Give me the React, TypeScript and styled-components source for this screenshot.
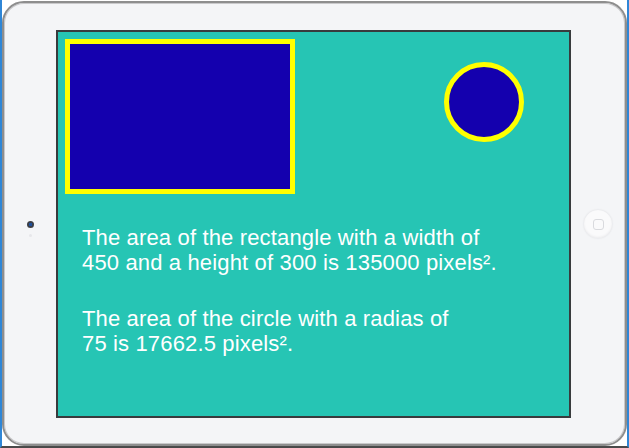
import { createGlobalStyle } from 'styled-components'
import styled from 'styled-components'

const GlobalStyle = createGlobalStyle`
  html, body {
    margin: 0;
    padding: 0;
    background: #ffffff;
  }
  body {
    font-family: "Liberation Sans", Arimo, Arial, Helvetica, sans-serif;
  }
`

const Stage = styled.div`
  box-sizing: border-box;
  width: 629px;
  height: 448px;
  display: flex;
  padding-top: 1px;
  border-left: 2px solid #2f86d6;
  border-right: 2px solid #2f86d6;
  border-bottom: 2px solid #4a4a4a;
  background: #ffffff;
`

const Device = styled.div`
  box-sizing: border-box;
  flex: 1;
  display: grid;
  grid-template-columns: 52px 515px 1fr;
  padding: 27px 0 26px;
  border: 2px solid #8e8e8e;
  border-radius: 22px;
  background: #f4f5f7;
  box-shadow: inset 0 0 0 1px #c9c9cb;
`

const Bezel = styled.div<{ $offset?: number }>`
  display: flex;
  flex-direction: column;
  align-items: center;
  justify-content: center;
  padding-top: ${(p) => p.$offset ?? 0}px;
`

const Camera = styled.div`
  width: 7px;
  height: 7px;
  border-radius: 50%;
  background: radial-gradient(circle, #1f4f9a 0 1.5px, #3b3f47 2px);
`

const Sensor = styled.div`
  width: 3px;
  height: 3px;
  margin-top: 6px;
  border-radius: 50%;
  background: #e6e7ea;
`

const HomeButton = styled.div`
  display: flex;
  align-items: center;
  justify-content: center;
  width: 28px;
  height: 28px;
  border-radius: 50%;
  background: #fafafb;
  box-shadow: 0 0 2px 0 #d6d7db, inset 0 -1px 2px #ececee;
`

const HomeSquare = styled.div`
  box-sizing: border-box;
  width: 11px;
  height: 11px;
  border-radius: 3px;
  border: 1px solid #d9dade;
`

const Screen = styled.div`
  box-sizing: border-box;
  display: flex;
  flex-direction: column;
  padding: 7px 0 0 7px;
  border: 2px solid #383b3d;
  background: #26c5b4;
  color: #ffffff;
`

const Shapes = styled.div`
  display: flex;
  align-items: flex-start;
  gap: 149px;
`

const Rect = styled.div`
  box-sizing: border-box;
  width: 230px;
  height: 155px;
  border: 5px solid #ffff00;
  background: #1400ae;
`

const Circle = styled.div`
  box-sizing: border-box;
  width: 80px;
  height: 80px;
  margin-top: 23px;
  border-radius: 50%;
  border: 5px solid #ffff00;
  background: #1400ae;
`

const Copy = styled.div`
  display: flex;
  flex-direction: column;
  gap: 31px;
  padding: 31px 0 0 17px;
`

const Paragraph = styled.p`
  margin: 0;
  font-family: "Liberation Sans", Arimo, Arial, Helvetica, sans-serif;
  font-size: 22px;
  letter-spacing: 0.15px;
  line-height: 25px;
  white-space: nowrap;
`

export default function App() {
  return (
    <>
      <GlobalStyle />
      <Stage>
        <Device>
          <Bezel $offset={9}>
            <Camera />
            <Sensor />
          </Bezel>
          <Screen>
            <Shapes>
              <Rect />
              <Circle />
            </Shapes>
            <Copy>
              <Paragraph>
                The area of the rectangle with a width of
                <br />
                450 and a height of 300 is 135000 pixels².
              </Paragraph>
              <Paragraph>
                The area of the circle with a radias of
                <br />
                75 is 17662.5 pixels².
              </Paragraph>
            </Copy>
          </Screen>
          <Bezel>
            <HomeButton>
              <HomeSquare />
            </HomeButton>
          </Bezel>
        </Device>
      </Stage>
    </>
  )
}
